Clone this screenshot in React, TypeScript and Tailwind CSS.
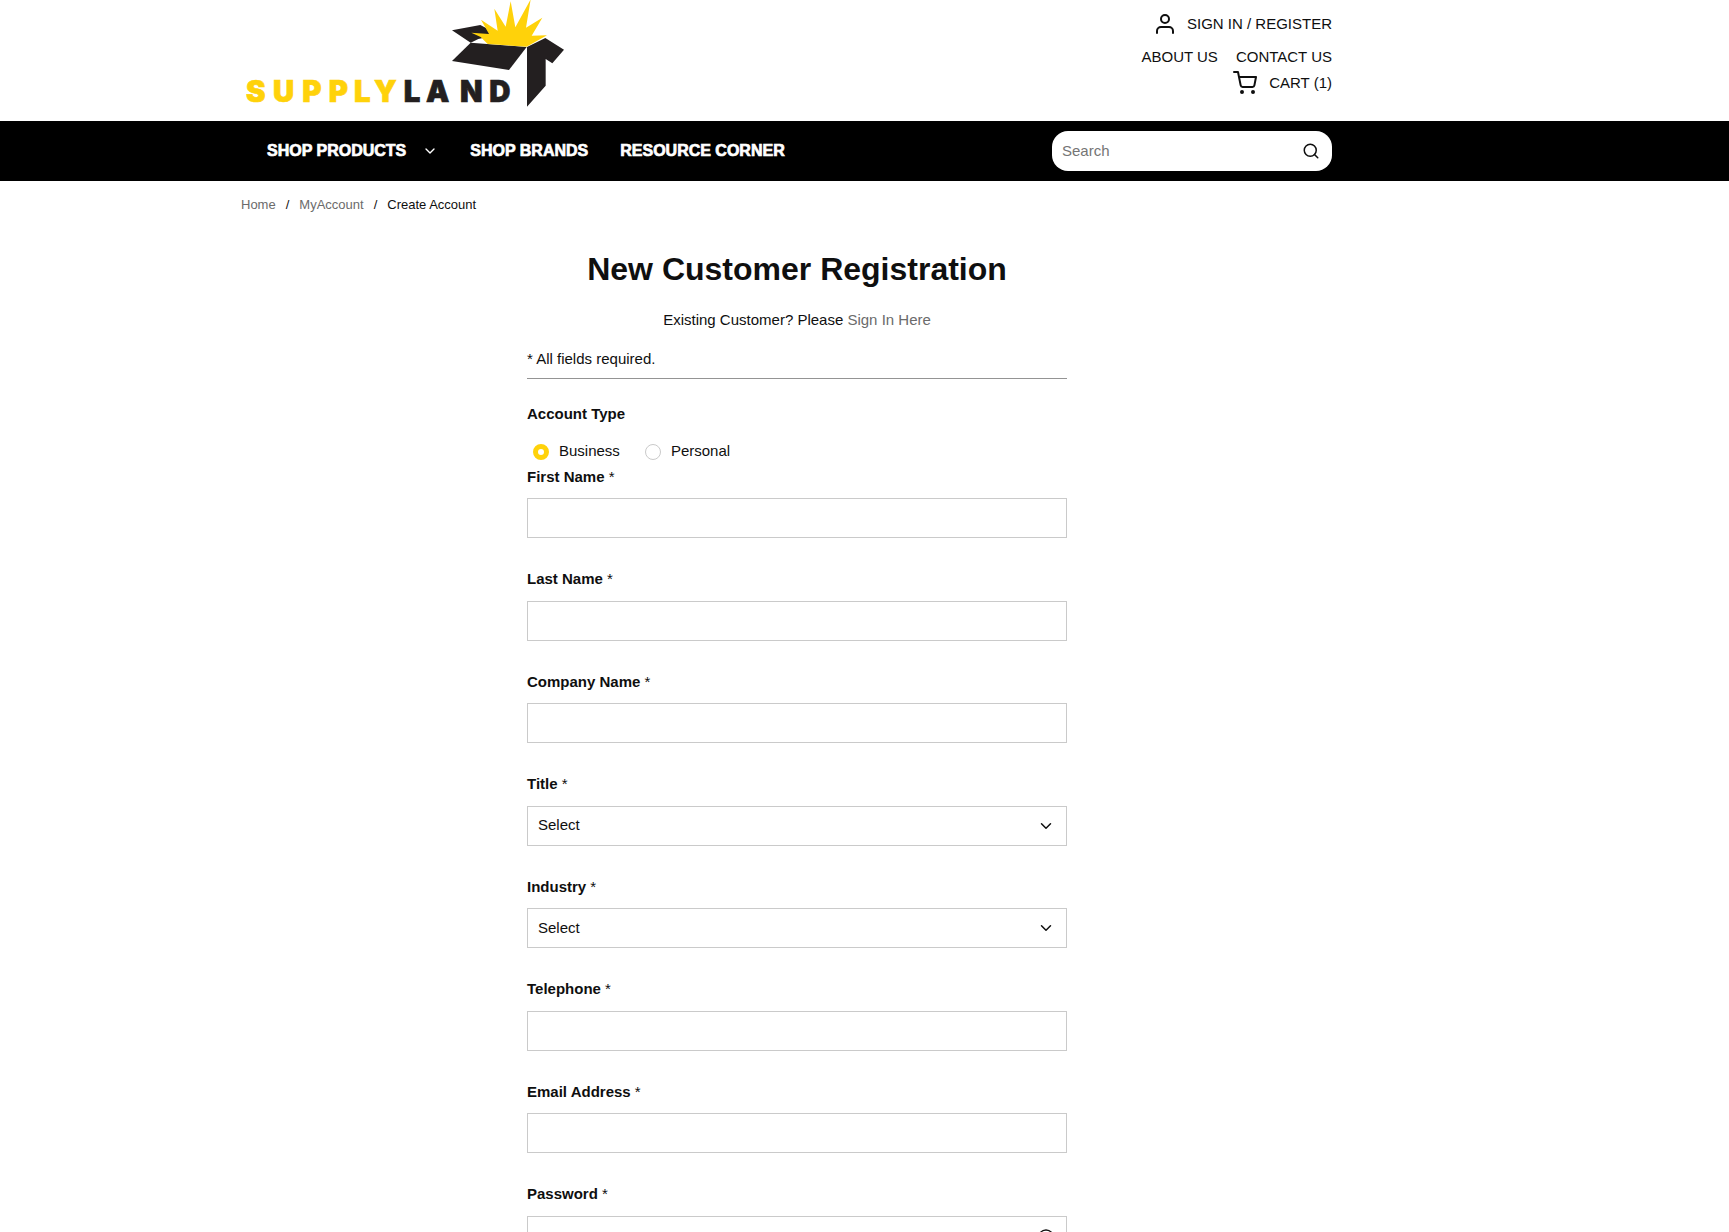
import { ReactNode } from "react";

const iconProps = {
  viewBox: "0 0 24 24",
  fill: "none",
  stroke: "currentColor",
  strokeLinecap: "round",
  strokeLinejoin: "round",
  "aria-hidden": true,
} as const;

function Chevron({ className }: { className: string }) {
  return (
    <svg {...iconProps} strokeWidth={2} className={className}>
      <path d="M6 9l6 6 6-6" />
    </svg>
  );
}

function Logo() {
  return (
    <svg viewBox="33 0 990 330" className="h-[110px] w-[330px]" role="img" aria-label="Supplyland">
      <path d="M666 91L751 75L768 84L786 108L745 117L722 128Z" fill="#231f20" />
      <path d="M722 128L890 141L837 210L666 183Z" fill="#231f20" />
      <path d="M946 114L1002 149L967 190L947 177V257L891 320V141Z" fill="#231f20" />
      <path
        d="M724 98L777 102L753 59L803 92L793 26L827 80L842 4L856 82L902 -2L888 83L937 53L905 107L951 106L890 140L773 132L752 111Z"
        fill="#ffd20a"
      />
      <text
        x="48 129 217 296 372 432"
        y="305"
        className="fill-[#ffd20a] stroke-[#ffd20a] stroke-2 font-['Inter'] text-[88px] font-black"
      >
        SUPPLY
      </text>
      <text
        x="521 588 690 778"
        y="305"
        className="fill-[#231f20] stroke-[#231f20] stroke-2 font-['Inter'] text-[88px] font-black"
      >
        LAND
      </text>
    </svg>
  );
}

function Page({ children, className = "" }: { children: ReactNode; className?: string }) {
  return (
    <div className="max-w-[1594px]">
      <div className={`mx-auto max-w-[1112px] ${className}`}>{children}</div>
    </div>
  );
}

function Header() {
  return (
    <header>
      <Page className="flex h-[121px] items-start justify-between pr-[21px]">
        <a href="#home">
          <Logo />
        </a>
        <div className="flex flex-col items-end pt-3">
          <a href="#signin" className="flex h-6 items-center gap-[10px]">
            <svg {...iconProps} strokeWidth={2} className="size-6">
              <path d="M20 21v-2a4 4 0 0 0-4-4H8a4 4 0 0 0-4 4v2" />
              <circle cx="12" cy="7" r="4" />
            </svg>
            SIGN IN / REGISTER
          </a>
          <div className="mt-[9px] flex h-6 items-center gap-[18px]">
            <a href="#about">ABOUT US</a>
            <a href="#contact">CONTACT US</a>
          </div>
          <a href="#cart" className="mt-[2px] flex h-6 items-center gap-3">
            <svg {...iconProps} strokeWidth={2} className="size-6">
              <circle cx="9" cy="21" r="1" fill="currentColor" />
              <circle cx="20" cy="21" r="1" fill="currentColor" />
              <path d="M1 1h4l2.68 13.39a2 2 0 0 0 2 1.61h9.72a2 2 0 0 0 2-1.61L23 6H6" />
            </svg>
            CART (1)
          </a>
        </div>
      </Page>
      <div className="bg-black">
        <Page className="flex h-[60px] items-center justify-between pr-[21px] pl-[26px]">
          <nav className="flex items-center gap-8 text-base font-bold text-white">
            <button type="button" className="flex items-center gap-4">
              <span className="[-webkit-text-stroke:0.7px_white]">SHOP PRODUCTS</span>
              <Chevron className="size-4" />
            </button>
            <a href="#brands" className="[-webkit-text-stroke:0.7px_white]">SHOP BRANDS</a>
            <a href="#resources" className="[-webkit-text-stroke:0.7px_white]">RESOURCE CORNER</a>
          </nav>
          <form className="flex h-10 w-[280px] items-center rounded-2xl bg-white pr-3 pl-[10px]">
            <input
              type="search"
              aria-label="Search"
              placeholder="Search"
              className="min-w-0 flex-1 outline-none placeholder:text-[#757575]"
            />
            <button type="button" aria-label="Submit search">
              <svg {...iconProps} strokeWidth={2} className="size-[18px]">
                <circle cx="11" cy="11" r="8" />
                <path d="M21 21l-4.35-4.35" />
              </svg>
            </button>
          </form>
        </Page>
      </div>
    </header>
  );
}

function FieldLabel({ id, children }: { id: string; children: ReactNode }) {
  return (
    <label htmlFor={id} className="block leading-normal font-bold">
      {children} <span className="font-normal">*</span>
    </label>
  );
}

const boxStyle = "block h-10 w-full border border-[#cacaca] bg-white px-[10px] outline-none";

function TextField({ id, label, type = "text" }: { id: string; label: string; type?: string }) {
  return (
    <div className="mb-[30px]">
      <FieldLabel id={id}>{label}</FieldLabel>
      <input id={id} type={type} className={`mt-[10px] ${boxStyle}`} />
    </div>
  );
}

function SelectField({ id, label }: { id: string; label: string }) {
  return (
    <div className="mb-[30px]">
      <FieldLabel id={id}>{label}</FieldLabel>
      <div className="relative mt-[10px]">
        <select id={id} className={`appearance-none ${boxStyle}`}>
          <option>Select</option>
        </select>
        <Chevron className="pointer-events-none absolute top-[11px] right-3 size-[18px]" />
      </div>
    </div>
  );
}

function Radio({ label, checked = false }: { label: string; checked?: boolean }) {
  return (
    <label className="flex items-center gap-[10px]">
      <input
        type="radio"
        name="accountType"
        defaultChecked={checked}
        className="size-4 appearance-none rounded-full border border-[#cacaca] bg-white checked:border-[5px] checked:border-[#ffd20a]"
      />
      {label}
    </label>
  );
}

export default function App() {
  return (
    <div className="h-screen overflow-hidden bg-white font-['Liberation_Sans',Arial,sans-serif] text-[15px] text-[#0f0f0f]">
      <Header />
      <Page>
        <nav aria-label="Breadcrumb" className="flex h-12 items-center gap-[10px] text-[13px]">
          <a href="#home" className="text-[#6b6b6b]">Home</a>
          <span>/</span>
          <a href="#account" className="text-[#6b6b6b]">MyAccount</a>
          <span>/</span>
          <span>Create Account</span>
        </nav>
        <main className="mx-auto max-w-[540px] pt-5">
          <h1 className="text-center text-[32px] leading-10 font-bold">New Customer Registration</h1>
          <p className="mt-5 text-center leading-normal">
            Existing Customer? Please{" "}
            <a href="#signin" className="text-[#6b6b6b]">Sign In Here</a>
          </p>
          <p className="mt-4 border-b border-[#949494] pb-2 leading-normal">* All fields required.</p>
          <form>
            <fieldset className="mt-6">
              <legend className="leading-normal font-bold">Account Type</legend>
              <div className="mt-[14px] flex h-6 items-center gap-[25px] pl-[6px]">
                <Radio label="Business" checked />
                <Radio label="Personal" />
              </div>
            </fieldset>
            <div className="mt-[2px]">
              <TextField id="firstName" label="First Name" />
              <TextField id="lastName" label="Last Name" />
              <TextField id="company" label="Company Name" />
              <SelectField id="title" label="Title" />
              <SelectField id="industry" label="Industry" />
              <TextField id="telephone" label="Telephone" type="tel" />
              <TextField id="email" label="Email Address" type="email" />
              <FieldLabel id="password">Password</FieldLabel>
              <div className="relative mt-[10px]">
                <input id="password" type="password" className={boxStyle} />
                <button
                  type="button"
                  aria-label="Show password"
                  className="absolute top-[11px] right-3"
                >
                  <svg {...iconProps} strokeWidth={2} className="size-[18px]">
                    <path d="M1 12s4-8 11-8 11 8 11 8-4 8-11 8-11-8-11-8z" />
                    <circle cx="12" cy="12" r="3" />
                  </svg>
                </button>
              </div>
            </div>
          </form>
        </main>
      </Page>
    </div>
  );
}
